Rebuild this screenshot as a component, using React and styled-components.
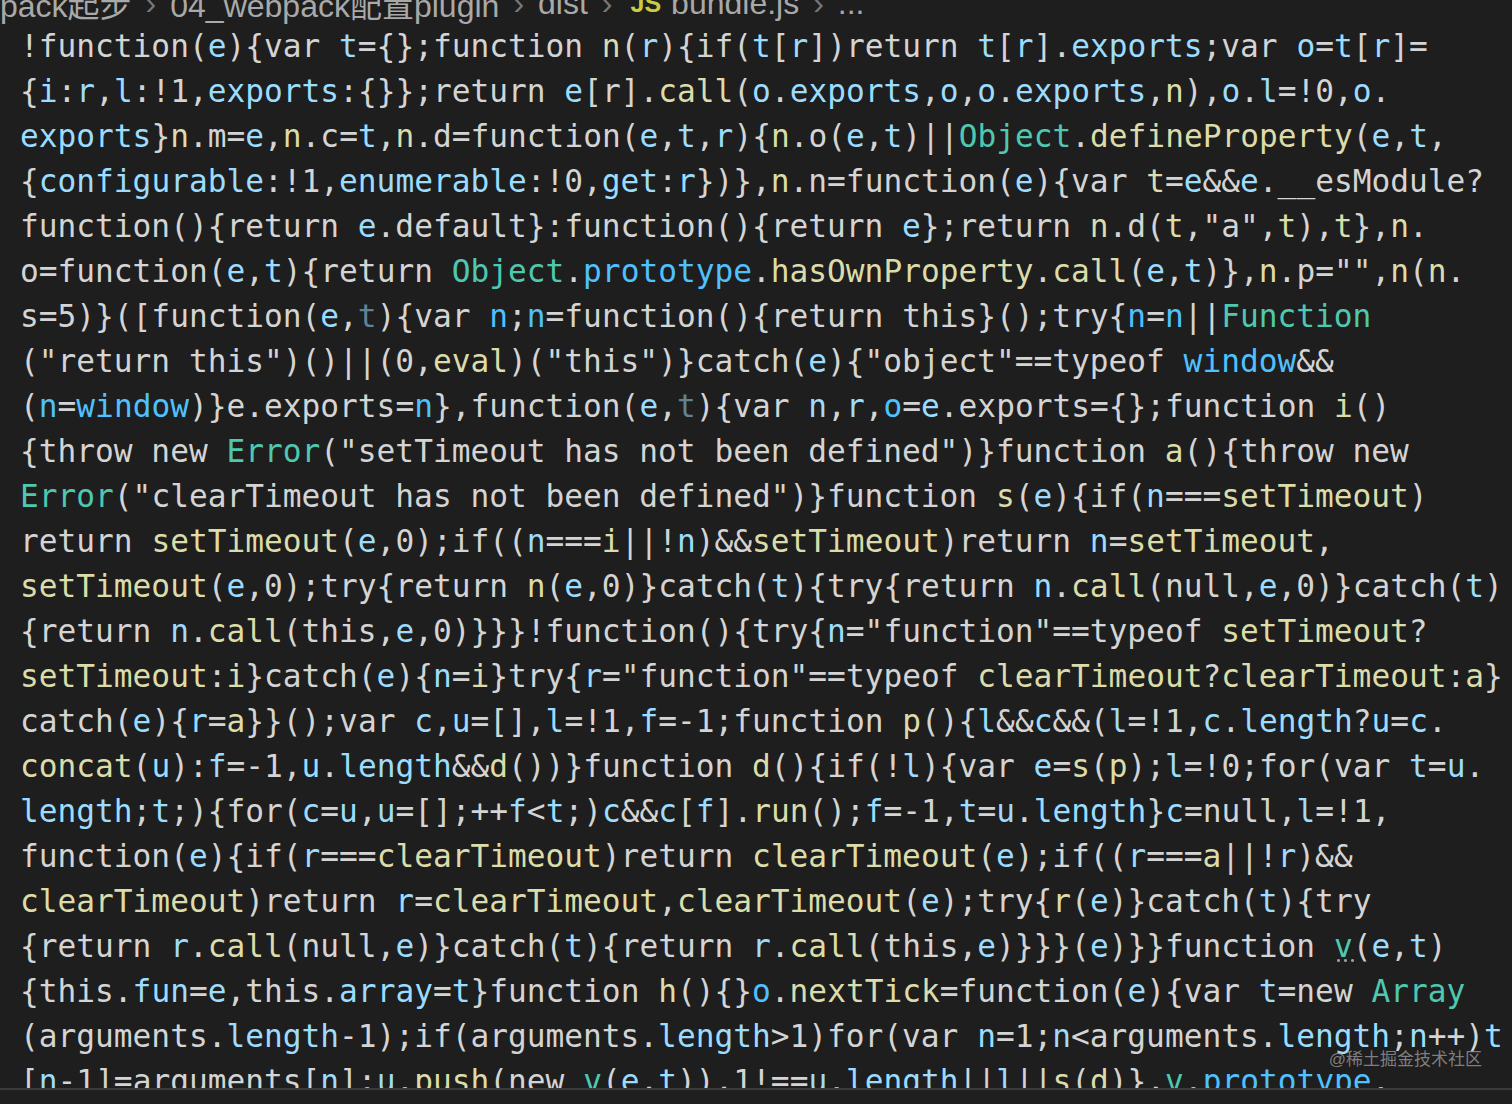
import React from 'react'
import styled, { createGlobalStyle } from 'styled-components'

const COLORS = {
    b: '#9cdcfe',
    B: '#4fc1ff',
    y: '#dcdcaa',
    g: '#4ec9b0',
    f: 'rgba(156, 220, 254, 0.55)',
}

// «<color><text>» marks a coloured token, everything else is plain text
const lines = [
    '!function(«be»){var «bt»={};function «yn»(«br»){if(«bt»[«br»])return «bt»[«br»].«bexports»;var «bo»=«bt»[«br»]=',
    '{«bi»:«br»,«bl»:!1,«bexports»:{}};return «be»[r].«ycall»(«bo».«bexports»,«bo»,«bo».«bexports»,«yn»),«bo».«bl»=!0,«bo».',
    '«bexports»}«yn».m=«be»,«yn».c=«bt»,«yn».d=function(«be»,«bt»,«br»){«yn».o(«be»,«bt»)||«gObject».«ydefineProperty»(«be»,«bt»,',
    '{«bconfigurable»:!1,«benumerable»:!0,«bget»:«br»})},«yn».n=function(«be»){var «yt»=«be»&&«be».__esModule?',
    'function(){return «be».default}:function(){return «be»};return «yn».d(«yt»,"a",«yt»),«yt»},«yn».',
    'o=function(«be»,«bt»){return «gObject».«Bprototype».«yhasOwnProperty».«ycall»(«be»,«bt»)},«yn».p="",«yn»(«yn».',
    's=5)}([function(«be»,«ft»){var «Bn»;«Bn»=function(){return this}();try{«Bn»=«Bn»||«gFunction»',
    '("return this")()||(0,«yeval»)("this")}catch(«be»){"object"==typeof «Bwindow»&&',
    '(«Bn»=«Bwindow»)}e.exports=«Bn»},function(«be»,«ft»){var «bn»,«br»,«Bo»=«be».exports={};function «yi»()',
    '{throw new «gError»("setTimeout has not been defined")}function «ya»(){throw new',
    '«gError»("clearTimeout has not been defined")}function «ys»(«be»){if(«bn»===«ysetTimeout»)',
    'return «ysetTimeout»(«be»,0);if((«bn»===«yi»||!«bn»)&&«ysetTimeout»)return «bn»=«ysetTimeout»,',
    '«ysetTimeout»(«be»,0);try{return «yn»(«be»,0)}catch(«bt»){try{return «bn».«ycall»(null,«be»,0)}catch(«bt»)',
    '{return «bn».«ycall»(this,«be»,0)}}}!function(){try{«bn»="function"==typeof «ysetTimeout»?',
    '«ysetTimeout»:«yi»}catch(«be»){«bn»=«yi»}try{«br»="function"==typeof «yclearTimeout»?«yclearTimeout»:«ya»}',
    'catch(«be»){«br»=«ya»}}();var «bc»,«bu»=[],«bl»=!1,«bf»=-1;function «yp»(){«bl»&&«bc»&&(«bl»=!1,«bc».«blength»?«bu»=«bc».',
    '«yconcat»(«bu»):«bf»=-1,«bu».«blength»&&«yd»())}function «yd»(){if(!«bl»){var «be»=«ys»(«yp»);«bl»=!0;for(var «bt»=«bu».',
    '«blength»;«bt»;){for(«bc»=«bu»,«bu»=[];++«bf»<«bt»;)«bc»&&«bc»[«bf»].«yrun»();«bf»=-1,«bt»=«bu».«blength»}«bc»=null,«bl»=!1,',
    'function(«be»){if(«br»===«yclearTimeout»)return «yclearTimeout»(«be»);if((«br»===«ya»||!«br»)&&',
    '«yclearTimeout»)return «br»=«yclearTimeout»,«yclearTimeout»(«be»);try{«yr»(«be»)}catch(«bt»){try',
    '{return «br».«ycall»(null,«be»)}catch(«bt»){return «br».«ycall»(this,«be»)}}}(«be»)}}function «Gv»(«be»,«bt»)',
    '{this.«bfun»=«be»,this.«barray»=«bt»}function «yh»(){}«Bo».«ynextTick»=function(«be»){var «bt»=new «gArray»',
    '(arguments.«blength»-1);if(arguments.«blength»>1)for(var «bn»=1;«bn»<arguments.«blength»;«bn»++)«bt»',
    '[«bn»-1]=arguments[«bn»]:«bu».«ypush»(new «gv»(«be»,«bt»)),1!==«bu».«blength»||«bl»||«ys»(«yd»)},«gv».«Bprototype».',
]

function parse(line) {
    const out = []
    const re = /«(.)(.*?)»/g
    let last = 0
    let m
    while ((m = re.exec(line))) {
        if (m.index > last) out.push({ c: null, t: line.slice(last, m.index) })
        out.push({ c: m[1], t: m[2] })
        last = re.lastIndex
    }
    if (last < line.length) out.push({ c: null, t: line.slice(last) })
    return out
}

function App() {
    return (
        <>
            <GlobalStyle />
            <EditorStyled>
                <Breadcrumbs>
                    <Crumb>pack起步</Crumb>
                    <Chevron>›</Chevron>
                    <Crumb>04_webpack配置plugin</Crumb>
                    <Chevron>›</Chevron>
                    <Crumb>dist</Crumb>
                    <Chevron>›</Chevron>
                    <JsIcon>JS</JsIcon>
                    <Crumb>bundle.js</Crumb>
                    <Chevron>›</Chevron>
                    <Crumb>...</Crumb>
                </Breadcrumbs>
                <CodeArea>
                    {lines.map((line, i) => (
                        <Line key={i}>
                            {parse(line).map((tok, j) =>
                                tok.c === 'G' ? (
                                    <Hinted key={j} $c="g">{tok.t}</Hinted>
                                ) : (
                                    <Token key={j} $c={tok.c}>{tok.t}</Token>
                                )
                            )}
                        </Line>
                    ))}
                    <Watermark>@稀土掘金技术社区</Watermark>
                </CodeArea>
                <Panel />
            </EditorStyled>
        </>
    )
}

const GlobalStyle = createGlobalStyle`
    html, body {
        margin: 0;
        padding: 0;
        background: #1e1e1e;
        overflow: hidden;
    }
`

const EditorStyled = styled.div`
    display: flex;
    flex-direction: column;
    width: 1512px;
    height: 1104px;
    background: #1e1e1e;
    overflow: hidden;
`

const Breadcrumbs = styled.div`
    display: flex;
    align-items: center;
    gap: 11px;
    height: 40px;
    margin-top: -17px;
    font-family: "Liberation Sans", "Noto Sans CJK SC", sans-serif;
    font-size: 32px;
    color: #a8a8a8;
    white-space: nowrap;
    flex-shrink: 0;
`

const Crumb = styled.span`
    color: #a9a9a9;
`

const Chevron = styled.span`
    color: #767676;
    padding: 0 3px;
`

const JsIcon = styled.span`
    color: #cbcb41;
    font-weight: 700;
    font-size: 25px;
    margin-left: 4px;
    margin-right: -1px;
`

const CodeArea = styled.div`
    position: relative;
    flex: 1;
    overflow: hidden;
    padding: 1px 0 0 20px;
    font-family: "DejaVu Sans Mono", "Liberation Mono", monospace;
    font-size: 31.18px;
    color: #d4d4d4;
`

const Line = styled.div`
    height: 45px;
    line-height: 45px;
    white-space: pre;
`

const Token = styled.span`
    color: ${p => (p.$c ? COLORS[p.$c] : '#d4d4d4')};
`

const Hinted = styled(Token)`
    position: relative;
    &::after {
        content: "";
        position: absolute;
        left: 1px;
        right: -3px;
        bottom: 2px;
        height: 3px;
        background: radial-gradient(circle, #9a9a9a 1.3px, transparent 1.6px) 0 0 / 7px 3px repeat-x;
    }
`

const Watermark = styled.div`
    position: absolute;
    right: 30px;
    bottom: 18px;
    font-family: "Liberation Sans", "Noto Sans CJK SC", sans-serif;
    font-size: 17px;
    color: rgba(160, 160, 160, 0.75);
    pointer-events: none;
`

const Panel = styled.div`
    height: 14px;
    flex-shrink: 0;
    border-top: 2px solid #3a3a3a;
    background: #1f1f1f;
`

export default App
